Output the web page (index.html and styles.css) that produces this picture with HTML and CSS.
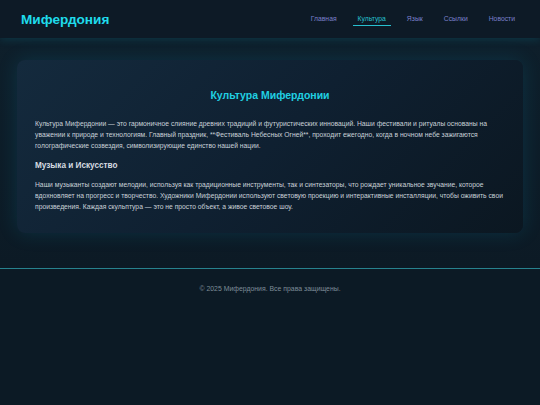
FILE: index.html
```html
<!DOCTYPE html>
<html lang="ru">
<head>
<meta charset="utf-8">
<title>Мифердония — Культура</title>
<link rel="stylesheet" href="styles.css">
</head>
<body>
<header class="site-header">
  <div class="logo">Мифердония</div>
  <nav class="nav">
    <a class="nav-link" href="#">Главная</a>
    <a class="nav-link active" href="#">Культура</a>
    <a class="nav-link" href="#">Язык</a>
    <a class="nav-link" href="#">Ссылки</a>
    <a class="nav-link" href="#">Новости</a>
  </nav>
</header>
<main class="main">
  <section class="card">
    <h2 class="card-title">Культура Мифердонии</h2>
    <p class="text">Культура Мифердонии — это гармоничное слияние древних традиций и футуристических инноваций. Наши фестивали и ритуалы основаны на уважении к природе и технологиям. Главный праздник, **Фестиваль Небесных Огней**, проходит ежегодно, когда в ночном небе зажигаются голографические созвездия, символизирующие единство нашей нации.</p>
    <h3 class="subtitle">Музыка и Искусство</h3>
    <p class="text">Наши музыканты создают мелодии, используя как традиционные инструменты, так и синтезаторы, что рождает уникальное звучание, которое вдохновляет на прогресс и творчество. Художники Мифердонии используют световую проекцию и интерактивные инсталляции, чтобы оживить свои произведения. Каждая скульптура — это не просто объект, а живое световое шоу.</p>
  </section>
</main>
<footer class="site-footer">
  <p class="copy">© 2025 Мифердония. Все права защищены.</p>
</footer>
</body>
</html>
```
FILE: styles.css
```css
html, body {
  margin: 0;
  padding: 0;
}
body {
  background: #0c1a25;
  font-family: "Liberation Sans", Arial, sans-serif;
  color: #c9d1d8;
  min-height: 405px;
}
.site-header {
  display: flex;
  justify-content: space-between;
  align-items: center;
  height: 38px;
  padding: 0 20px 0 21px;
  background: #0d1a26;
  box-shadow: 0 2px 8px rgba(0, 190, 220, 0.14);
  position: relative;
  z-index: 1;
}
.logo {
  font-size: 13.6px;
  font-weight: bold;
  color: #1fdcec;
  margin-top: 1px;
}
.nav {
  display: flex;
  gap: 11px;
}
.nav-link {
  font-size: 6.8px;
  color: #7b80cc;
  text-decoration: none;
  padding: 2px 5px 3px;
  border-bottom: 1px solid transparent;
}
.nav-link.active {
  color: #27c0cf;
  border-bottom-color: #27c0cf;
}
.main {
  padding: 22px 17px 35px;
  background: linear-gradient(180deg, #0e1f2b 0%, #0c1a25 100%);
}
.card {
  padding: 18px 18px 18px;
  border-radius: 8px;
  background: linear-gradient(135deg, #142a3d 0%, #0f2031 50%, #0b1721 100%);
  box-shadow: 0 0 20px rgba(0, 170, 210, 0.16);
}
.card-title {
  margin: 10px 0 17px;
  text-align: center;
  font-size: 10.5px;
  line-height: 14px;
  color: #20d0e2;
}
.text {
  margin: 0;
  font-size: 6.75px;
  line-height: 10.8px;
  color: #c9d1d8;
}
.subtitle {
  margin: 10px 0 9px;
  font-size: 8.2px;
  line-height: 10px;
  color: #d6dce1;
}
.card .text:last-child {
  margin-bottom: 2px;
}
.site-footer {
  border-top: 1px solid #27828e;
  padding: 15px 0;
  text-align: center;
}
.copy {
  margin: 0;
  font-size: 6.9px;
  line-height: 10px;
  color: #7e8c98;
}
```
